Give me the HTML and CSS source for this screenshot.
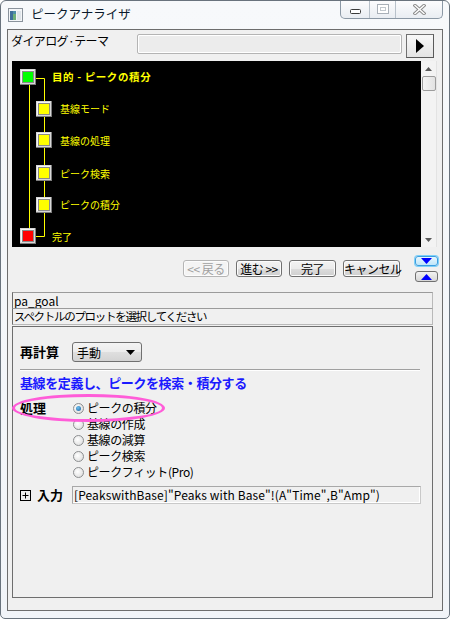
FILE: index.html
```html
<!DOCTYPE html>
<html lang="ja">
<head>
<meta charset="utf-8">
<title>ピークアナライザ</title>
<link rel="stylesheet" href="styles.css">
</head>
<body>
<div class="window">
  <div class="titlebar">
    <svg class="appicon" width="15" height="14" viewBox="0 0 15 14">
      <rect x="0.5" y="0.5" width="14" height="13" fill="#f4f6f8" stroke="#8a939c"/>
      <rect x="2" y="3" width="6" height="9" fill="#4f8fa8"/>
      <rect x="2" y="3" width="3" height="9" fill="#3e6f9a"/>
      <rect x="5" y="6" width="3" height="6" fill="#6fb07a"/>
      <rect x="9" y="3" width="4" height="9" fill="#dfe5ea"/>
    </svg>
    <span class="title">ピークアナライザ</span>
    <div class="caption">
      <div class="cbtn cmin">
        <svg width="11" height="5" viewBox="0 0 11 5"><rect x="0.5" y="0.5" width="10" height="4" rx="1" fill="#fff" stroke="#3b3b3b"/></svg>
      </div>
      <div class="cbtn cmax">
        <svg width="12" height="10" viewBox="0 0 12 10"><rect x="0.5" y="0.5" width="11" height="9" fill="#fff" stroke="#a9b0b8"/><rect x="3.5" y="3.5" width="5" height="3" fill="none" stroke="#c2c8ce"/></svg>
      </div>
      <div class="cbtn cclose">
        <svg width="13" height="11" viewBox="0 0 13 11"><path d="M2 1.5 L11 9.5 M11 1.5 L2 9.5" stroke="#8c8c8c" stroke-width="3.4" stroke-linecap="square"/><path d="M2 1.5 L11 9.5 M11 1.5 L2 9.5" stroke="#fff" stroke-width="1.4" stroke-linecap="square"/></svg>
      </div>
    </div>
  </div>

  <div class="client">
    <div class="theme-row">
      <span class="theme-label">ダイアログ·テーマ</span>
      <div class="theme-box"></div>
      <div class="theme-btn">
        <svg width="8" height="14" viewBox="0 0 8 14"><path d="M0 0 L8 7 L0 14 Z" fill="#000"/></svg>
      </div>
    </div>

    <div class="tree-area">
      <div class="tree">
        <svg width="409" height="186" viewBox="0 0 409 186">
          <g stroke="#ffff00" stroke-width="1" fill="none">
            <path d="M17.5 24 V167"/>
            <path d="M24 17.5 H32.5 V175.5 H24"/>
          </g>
          <g>
            <rect x="8" y="8" width="16" height="16" fill="#7d7d7d"/>
            <rect x="8" y="8" width="15" height="15" fill="#d8d8d8"/>
            <rect x="9" y="9" width="13" height="13" fill="#f6f6f6"/>
            <rect x="10.5" y="10.5" width="11" height="11" fill="#00ff00" stroke="#8a8a8a"/>
          </g>
          <g>
            <rect x="24" y="40" width="16" height="16" fill="#7d7d7d"/>
            <rect x="24" y="40" width="15" height="15" fill="#d8d8d8"/>
            <rect x="25" y="41" width="13" height="13" fill="#f6f6f6"/>
            <rect x="26.5" y="42.5" width="11" height="11" fill="#ffff00" stroke="#8a8a8a"/>
          </g>
          <g>
            <rect x="24" y="71" width="16" height="16" fill="#7d7d7d"/>
            <rect x="24" y="71" width="15" height="15" fill="#d8d8d8"/>
            <rect x="25" y="72" width="13" height="13" fill="#f6f6f6"/>
            <rect x="26.5" y="73.5" width="11" height="11" fill="#ffff00" stroke="#8a8a8a"/>
          </g>
          <g>
            <rect x="24" y="104" width="16" height="16" fill="#7d7d7d"/>
            <rect x="24" y="104" width="15" height="15" fill="#d8d8d8"/>
            <rect x="25" y="105" width="13" height="13" fill="#f6f6f6"/>
            <rect x="26.5" y="106.5" width="11" height="11" fill="#ffff00" stroke="#8a8a8a"/>
          </g>
          <g>
            <rect x="24" y="136" width="16" height="16" fill="#7d7d7d"/>
            <rect x="24" y="136" width="15" height="15" fill="#d8d8d8"/>
            <rect x="25" y="137" width="13" height="13" fill="#f6f6f6"/>
            <rect x="26.5" y="138.5" width="11" height="11" fill="#ffff00" stroke="#8a8a8a"/>
          </g>
          <g>
            <rect x="8" y="167" width="16" height="16" fill="#7d7d7d"/>
            <rect x="8" y="167" width="15" height="15" fill="#d8d8d8"/>
            <rect x="9" y="168" width="13" height="13" fill="#f6f6f6"/>
            <rect x="10.5" y="169.5" width="11" height="11" fill="#ff0000" stroke="#8a8a8a"/>
          </g>
          <g class="tree-text" fill="#ffff00">
            <text x="40" y="20" class="tree-title" font-weight="bold">目的 - ピークの積分</text>
            <text x="48" y="52">基線モード</text>
            <text x="48" y="84">基線の処理</text>
            <text x="48" y="117">ピーク検索</text>
            <text x="48" y="148">ピークの積分</text>
            <text x="40" y="180">完了</text>
          </g>
        </svg>
      </div>
      <div class="vscroll">
        <svg class="sarrow" width="7" height="4" viewBox="0 0 7 4"><path d="M0 4 L3.5 0 L7 4 Z" fill="#5a5a5a"/></svg>
        <div class="thumb"></div>
        <div class="sfill"></div>
        <svg class="sarrow" width="7" height="4" viewBox="0 0 7 4"><path d="M0 0 L3.5 4 L7 0 Z" fill="#5a5a5a"/></svg>
      </div>
    </div>

    <div class="nav-row">
      <div class="nav-buttons">
        <div class="btn disabled w46">&lt;&lt; 戻る</div>
        <div class="btn w46">進む &gt;&gt;</div>
        <div class="btn w47">完了</div>
        <div class="btn w57">キャンセル</div>
      </div>
      <div class="arrows">
        <div class="abtn active">
          <svg width="11" height="6" viewBox="0 0 11 6"><path d="M0 0 L11 0 L5.5 6 Z" fill="#0000ff"/></svg>
        </div>
        <div class="abtn">
          <svg width="11" height="6" viewBox="0 0 11 6"><path d="M0 6 L11 6 L5.5 0 Z" fill="#0000ff"/></svg>
        </div>
      </div>
    </div>

    <div class="field">pa_goal</div>
    <div class="field second">スペクトルのプロットを選択してください</div>

    <div class="panel">
      <div class="recalc-row">
        <span class="blabel recalc-label">再計算</span>
        <div class="dropdown">
          <span>手動</span>
          <svg width="9" height="5" viewBox="0 0 9 5"><path d="M0 0 L9 0 L4.5 5 Z" fill="#000"/></svg>
        </div>
      </div>
      <div class="sep"></div>
      <div class="heading">基線を定義し、ピークを検索・積分する</div>
      <div class="process">
        <span class="blabel proc-label">処理</span>
        <div class="radios">
          <div class="rrow"><span class="radio checked"></span><span>ピークの積分</span></div>
          <div class="rrow"><span class="radio"></span><span>基線の作成</span></div>
          <div class="rrow"><span class="radio"></span><span>基線の減算</span></div>
          <div class="rrow"><span class="radio"></span><span>ピーク検索</span></div>
          <div class="rrow"><span class="radio"></span><span>ピークフィット(Pro)</span></div>
        </div>
      </div>
      <div class="input-row">
        <svg class="expander" width="11" height="11" viewBox="0 0 11 11"><rect x="0.5" y="0.5" width="10" height="10" fill="none" stroke="#000"/><path d="M2.5 5.5 H8.5 M5.5 2.5 V8.5" stroke="#000"/></svg>
        <span class="blabel input-label">入力</span>
        <div class="input-box">[PeakswithBase]"Peaks with Base"!(A"Time",B"Amp")</div>
      </div>
      <div class="highlight"></div>
    </div>
  </div>
</div>
</body>
</html>
```

FILE: styles.css
```css
* { box-sizing: border-box; }
html, body { margin: 0; padding: 0; background: #ffffff; }
body {
  font-family: "Noto Sans CJK JP", "Noto Sans", sans-serif;
  font-size: 12px;
  color: #000;
}
.window {
  width: 450px;
  height: 619px;
  border: 1px solid #69737d;
  border-radius: 6px 6px 5px 5px;
  background: linear-gradient(#f7f9fb, #f1f4f8);
  display: flex;
  flex-direction: column;
  overflow: hidden;
}
.titlebar {
  height: 28px;
  display: flex;
  align-items: flex-start;
  flex: none;
}
.appicon { margin: 7px 0 0 7px; flex: none; }
.title {
  margin: 4px 0 0 8px;
  font-size: 12.5px;
  line-height: 18px;
  color: #0b1a2c;
}
.caption {
  margin-left: auto;
  margin-right: 6px;
  display: flex;
  height: 19px;
  margin-top: -1px;
  border: 1px solid #8b98a5;
  border-top: none;
  border-radius: 0 0 5px 5px;
  overflow: hidden;
  background: linear-gradient(#fdfdfe, #e9edf2);
}
.cbtn {
  display: flex;
  align-items: center;
  justify-content: center;
  height: 100%;
}
.cmin { width: 29px; border-right: 1px solid #b8c1ca; padding-top: 5px; }
.cmax { width: 26px; border-right: 1px solid #b8c1ca; }
.cclose { width: 46px; }

.client {
  margin: 0 6px 7px 6px;
  flex: 1;
  border: 1px solid #6d6d6d;
  background: #f0f0f0;
  display: flex;
  flex-direction: column;
}
.theme-row {
  display: flex;
  align-items: flex-start;
  margin-top: 3px;
  height: 24px;
}
.theme-label {
  width: 129px;
  padding-left: 3px;
  line-height: 16px;
  font-size: 12px;
  letter-spacing: -0.6px;
}
.theme-box {
  margin-top: 1px;
  width: 265px;
  height: 20px;
  border: 1px solid #b4b4b4;
  box-shadow: inset 1px 1px 0 #ffffff, inset -1px -1px 0 #ffffff;
  background: #ececec;
  border-radius: 2px;
}
.theme-btn {
  margin-top: 1px;
  margin-left: 4px;
  width: 28px;
  height: 24px;
  border: 1px solid #707070;
  border-right-color: #5a5a5a;
  border-bottom-color: #5a5a5a;
  background: linear-gradient(#f8f8f8, #e4e4e4);
  display: flex;
  align-items: center;
  justify-content: center;
}

.tree-area {
  margin: 4px 0 0 4px;
  height: 186px;
  display: flex;
}
.tree {
  width: 409px;
  height: 186px;
  background: #000;
}
.tree svg { display: block; }
.tree-text {
  font-family: "Noto Sans CJK JP", sans-serif;
  font-size: 10px;
}
.tree-title { font-size: 10.5px; letter-spacing: 0.6px; }
.vscroll {
  width: 16px;
  height: 186px;
  background: #f3f3f3;
  border-right: 1px solid #e3e3e3;
  display: flex;
  flex-direction: column;
  align-items: center;
}
.sarrow { margin: 6px 0 5px; flex: none; }
.thumb {
  width: 14px;
  height: 15px;
  border: 1px solid #9c9c9c;
  border-radius: 2px;
  background: linear-gradient(90deg, #f4f4f4, #e2e2e2);
  margin-left: 1px;
}
.sfill { flex: 1; }

.nav-row {
  margin-top: 9px;
  height: 26px;
  display: flex;
}
.nav-buttons {
  display: flex;
  gap: 7px;
  margin-left: 175px;
  margin-top: 4px;
}
.btn {
  height: 17px;
  border: 1px solid #707070;
  border-radius: 3px;
  background: linear-gradient(#f3f3f3 0%, #ebebeb 50%, #dddddd 51%, #cfcfcf 100%);
  box-shadow: inset 0 0 0 1px #fcfcfc;
  font-size: 12px;
  line-height: 15px;
  text-align: center;
  white-space: nowrap;
  letter-spacing: -0.5px;
}
.btn.disabled { color: #a0a0a0; border-color: #b5b5b5; background: #f4f4f4; }
.w46 { width: 46px; }
.w47 { width: 47px; }
.w57 { width: 57px; }
.arrows {
  margin-left: 15px;
  display: flex;
  flex-direction: column;
  gap: 5px;
}
.abtn {
  width: 23px;
  height: 11px;
  border: 1px solid #707070;
  border-radius: 3px;
  background: linear-gradient(#f2f2f2, #d6d6d6);
  display: flex;
  align-items: center;
  justify-content: center;
}
.abtn.active {
  height: 10px;
  border: 1px solid #3c9ee0;
  box-shadow: 0 0 0 1px #7fd0f8;
  background: linear-gradient(#e8f6fd, #bfe6f9);
}

.field {
  margin: 10px 0 0 4px;
  width: 421px;
  height: 17px;
  border: 1px solid #b9b9b9;
  border-left-color: #6b6b6b;
  border-top-color: #9b9b9b;
  background: #f0f0f0;
  padding-left: 1px;
  font-size: 12px;
  line-height: 15px;
  white-space: nowrap;
  overflow: hidden;
}
.field.second { margin-top: -1px; font-size: 11.5px; letter-spacing: -1.3px; }

.panel {
  margin: 1px 0 0 4px;
  width: 421px;
  height: 272px;
  border: 1px solid #6e6e6e;
  position: relative;
  padding-left: 7px;
  display: flex;
  flex-direction: column;
}
.blabel { font-weight: bold; font-size: 13px; line-height: 16px; }
.recalc-row {
  margin-top: 15px;
  height: 20px;
  display: flex;
  align-items: center;
}
.recalc-label { width: 52px; }
.dropdown {
  width: 70px;
  height: 20px;
  border: 1px solid #707070;
  border-radius: 3px;
  background: linear-gradient(#f4f4f4 0%, #ececec 50%, #dfdfdf 51%, #d3d3d3 100%);
  display: flex;
  align-items: center;
  justify-content: space-between;
  padding: 0 6px 0 4px;
  font-size: 12px;
}
.sep {
  margin-top: 7px;
  width: 400px;
  height: 2px;
  border-top: 1px solid #a0a0a0;
  border-bottom: 1px solid #ffffff;
}
.heading {
  margin-top: 4px;
  font-weight: bold;
  font-size: 13px;
  line-height: 16px;
  color: #1a1aff;
  letter-spacing: -0.4px;
}
.process {
  margin-top: 9px;
  display: flex;
}
.proc-label { width: 53px; }
.radios { display: flex; flex-direction: column; }
.rrow {
  height: 16px;
  display: flex;
  align-items: center;
  gap: 3px;
  font-size: 12px;
  line-height: 16px;
  letter-spacing: -0.4px;
}
.radio {
  width: 11px;
  height: 11px;
  border-radius: 50%;
  border: 1px solid #8c8e90;
  background: radial-gradient(circle at 40% 40%, #ffffff, #d8d8d8);
  position: relative;
  flex: none;
}
.radio.checked::after {
  content: "";
  position: absolute;
  left: 2px;
  top: 2px;
  width: 5px;
  height: 5px;
  border-radius: 50%;
  background: radial-gradient(circle at 40% 35%, #6bc0f0, #1d5f9c);
}
.input-row {
  margin-top: 6px;
  height: 18px;
  display: flex;
  align-items: center;
}
.expander { flex: none; }
.input-label { margin-left: 6px; width: 35px; }
.input-box {
  width: 349px;
  height: 18px;
  border: 1px solid #c9c9c9;
  border-left-color: #a8a8a8;
  border-top-color: #a8a8a8;
  box-shadow: inset -1px -1px 0 #ffffff;
  background: #f0f0f0;
  padding-left: 1px;
  font-size: 12px;
  line-height: 16px;
  white-space: nowrap;
  overflow: hidden;
  letter-spacing: 0.1px;
}
.highlight {
  position: absolute;
  left: -1px;
  top: 67px;
  width: 153px;
  height: 28px;
  border: 3px solid #ff5cd8;
  border-radius: 50%;
  pointer-events: none;
}
```
